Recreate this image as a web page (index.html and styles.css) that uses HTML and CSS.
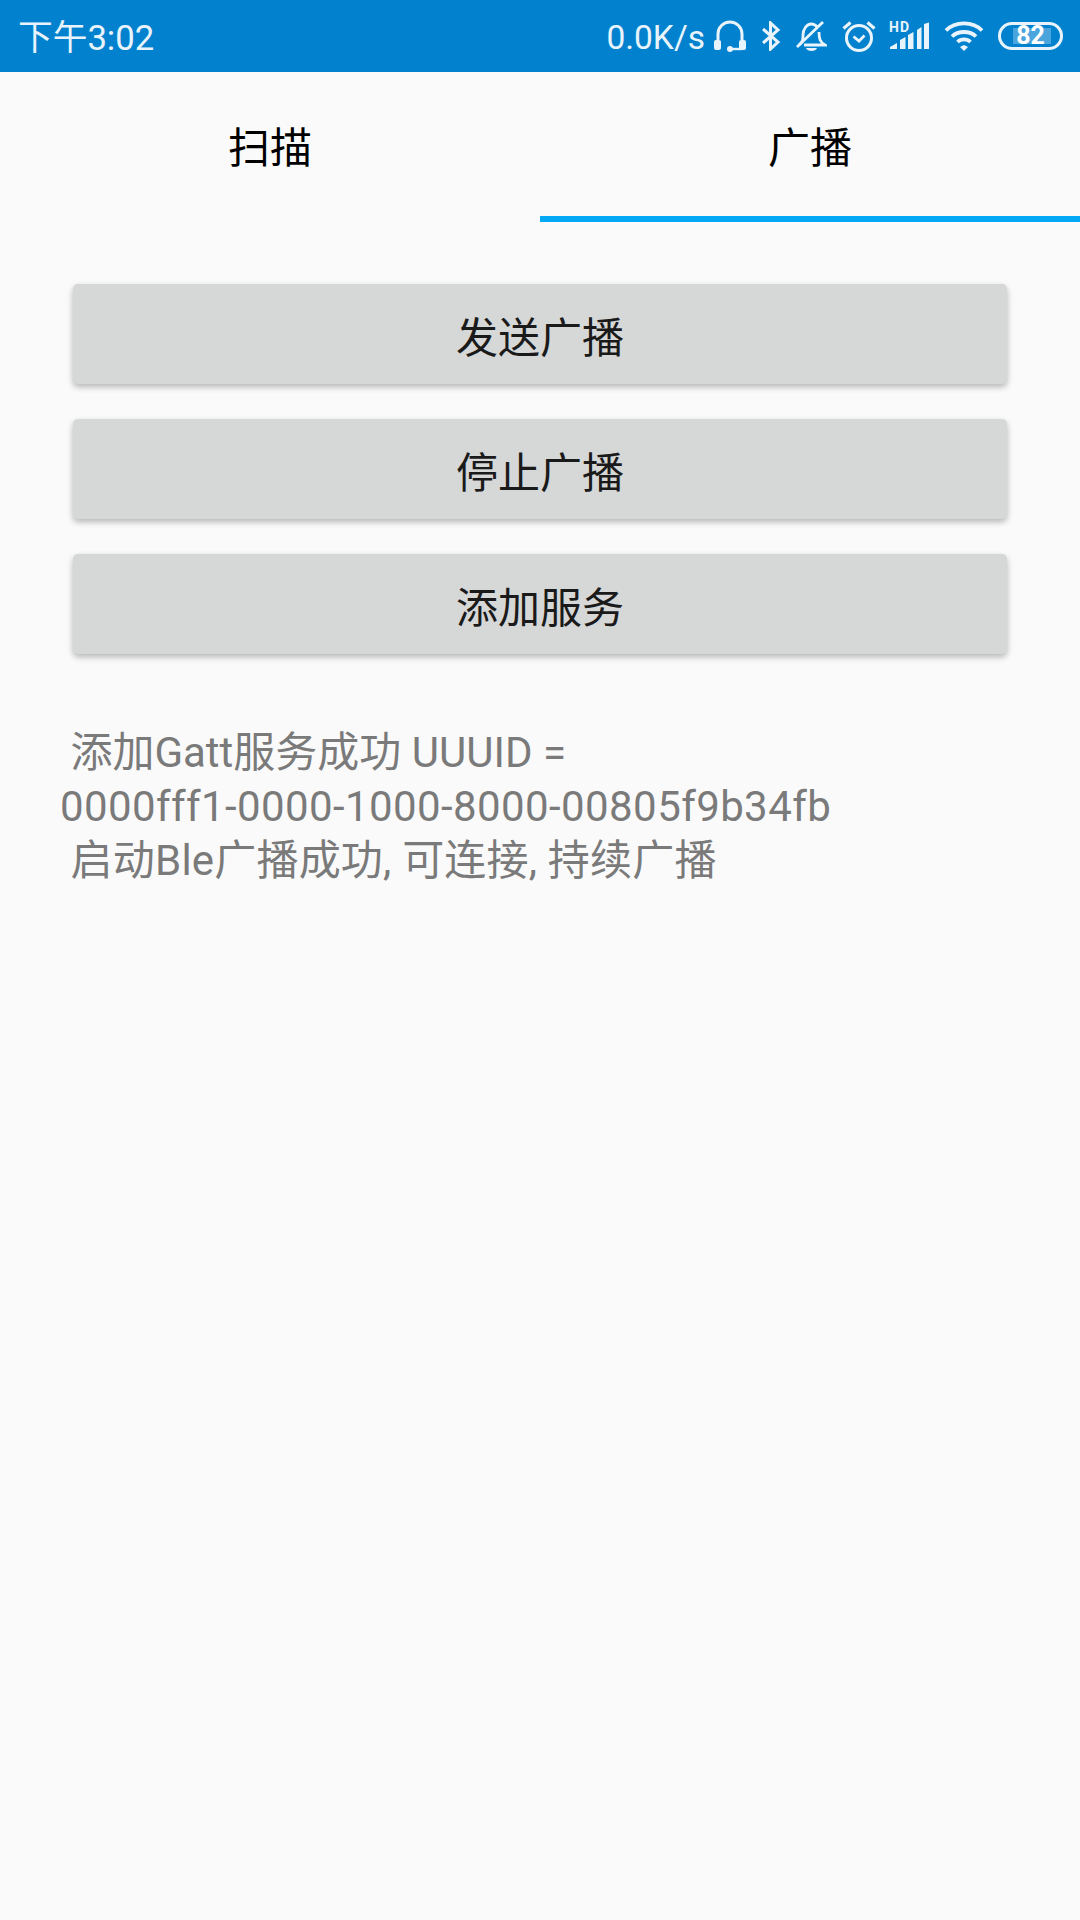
FILE: index.html
```html
<!DOCTYPE html>
<html lang="zh-CN">
<head>
    <meta charset="UTF-8">
    <meta name="viewport" content="width=device-width, initial-scale=1.0">
    <title>广播</title>
    <link rel="stylesheet" href="styles.css">
</head>
<body>

<div class="status-bar">
    <span class="clock">下午3:02</span>
    <div class="status-right">
        <span class="speed">0.0K/s</span>
        <svg class="icon-headset" width="34" height="32" viewBox="0 0 34 32">
            <path d="M5 20V14a12 12 0 0 1 24 0v6" fill="none" stroke="#e8f3fb" stroke-width="3"/>
            <rect x="1" y="20" width="7" height="10" rx="2" fill="#e8f3fb"/>
            <rect x="26" y="20" width="7" height="10" rx="2" fill="#e8f3fb"/>
            <path d="M17 29H29" fill="none" stroke="#e8f3fb" stroke-width="2.4"/>
            <circle cx="17" cy="29" r="3" fill="#e8f3fb"/>
        </svg>
        <svg class="icon-bt" width="20" height="30" viewBox="0 0 20 30">
            <path d="M2 8L17 21L9.500 28V2L17 9L2 22" fill="none" stroke="#e8f3fb" stroke-width="3"/>
        </svg>
        <svg class="icon-bell" width="32" height="32" viewBox="0 0 32 32">
            <path d="M4 25C8 22 8 19 8 15C8 9 12 4 16 4C19 4 21 5 23 8M24 12C24 19 25 22 30 25H9" fill="none" stroke="#e8f3fb" stroke-width="2.800"/>
            <path d="M2 27L28 2" fill="none" stroke="#e8f3fb" stroke-width="2.800"/>
            <path d="M11 28H22C21 32 12 32 11 28Z" fill="#e8f3fb"/>
        </svg>
        <svg class="icon-alarm" width="34" height="32" viewBox="0 0 34 32">
            <circle cx="17" cy="18" r="12.500" fill="none" stroke="#e8f3fb" stroke-width="3"/>
            <path d="M11.500 16.500L17 21L22.500 15.500" fill="none" stroke="#e8f3fb" stroke-width="2.800"/>
            <path d="M1.500 8.500L8.500 2.500M32.500 8.500L25.500 2.500" fill="none" stroke="#e8f3fb" stroke-width="3.200"/>
        </svg>
        <div class="signal">
            <span class="hd">HD</span>
            <svg width="40" height="28" viewBox="0 0 40 28">
                <path d="M1 27V25L8 21V27ZM11 27V18L16.500 15V27ZM19 27V13L24.500 10V27ZM28 27V8L32.500 5V27ZM35 27V2L40 0.500V27Z" fill="#e8f3fb"/>
            </svg>
        </div>
        <svg class="icon-wifi" width="42" height="30" viewBox="0 0 42 30">
            <path d="M3 9.500C12 0 30 0 39 9.500M9 15.500C15 9.500 27 9.500 33 15.500M14.500 21C18 17.500 24 17.500 27.500 21" fill="none" stroke="#e8f3fb" stroke-width="3.800"/>
            <path d="M17 26L21 24L25 26L21 30Z" fill="#e8f3fb"/>
        </svg>
        <div class="battery">
            <div class="battery-fill"></div>
            <span class="battery-num">82</span>
        </div>
    </div>
</div>

<div class="tabs">
    <div class="tab">扫描</div>
    <div class="tab active">广播</div>
</div>

<div class="content">
    <button class="btn">发送广播</button>
    <button class="btn">停止广播</button>
    <button class="btn">添加服务</button>
    <div class="log">
        <div class="log-line"> 添加Gatt服务成功 UUUID =</div>
        <div class="log-line uuid">0000fff1-0000-1000-8000-00805f9b34fb</div>
        <div class="log-line status"> 启动Ble广播成功, 可连接, 持续广播</div>
    </div>
</div>

</body>
</html>
```

FILE: styles.css
```css
body { margin: 0; background-color: #fafafa; font-family: Roboto, "Noto Sans CJK SC", sans-serif; }

.status-bar { height: 72px; background-color: #0282ce; color: #e8f3fb; display: flex; justify-content: space-between; align-items: center; padding: 0 17px 0 18px; }
.clock { font-size: 34.7px; margin-top: -3px; }
.status-right { display: flex; align-items: center; }
.speed { font-size: 33.5px; margin: 2px 8px 0 0; }
.status-right svg { display: block; }
.icon-headset { margin-right: 14px; }
.icon-bt { margin-right: 14px; }
.icon-bell { margin-right: 15px; }
.icon-alarm { margin-right: 11px; }
.signal { position: relative; width: 42px; height: 32px; margin-right: 14px; }
.signal svg { position: absolute; right: 0; bottom: 2px; }
.hd { position: absolute; left: 2px; top: 0; font-size: 14px; letter-spacing: 1px; font-weight: 700; line-height: 14px; }
.icon-wifi { margin-right: 13px; }
.battery { position: relative; width: 65px; height: 28px; box-sizing: border-box; border: 3px solid #e8f3fb; border-radius: 14px; overflow: hidden; display: flex; align-items: center; justify-content: center; }
.battery-fill { position: absolute; left: 12px; top: 3px; bottom: 3px; width: 38px; background-color: #4aa5dd; }
.battery-num { position: relative; font-size: 25px; font-weight: 700; line-height: 22px; color: #fff; }

.tabs { display: flex; height: 150px; }
.tab { flex: 1; display: flex; align-items: center; justify-content: center; box-sizing: border-box; padding-bottom: 6px; font-size: 42px; color: #000; }
.tab.active { border-bottom: 6px solid #03a9f4; padding-bottom: 0; }

.content { padding: 62px 73px 0; }
.btn { display: block; width: 100%; height: 100px; margin: 0 0 35px; padding: 0; border: none; border-radius: 5px; background-color: #d6d7d7; color: #1a1a1a; font-family: inherit; font-size: 42px; box-shadow: 0 3px 6px rgba(0, 0, 0, 0.28); }
.log { margin: 72px -13px 0; font-size: 42px; line-height: 54px; color: #7a7a7a; }
.log-line { white-space: pre; }
.uuid { letter-spacing: 0.4px; }
.status { letter-spacing: 0.2px; }
```
